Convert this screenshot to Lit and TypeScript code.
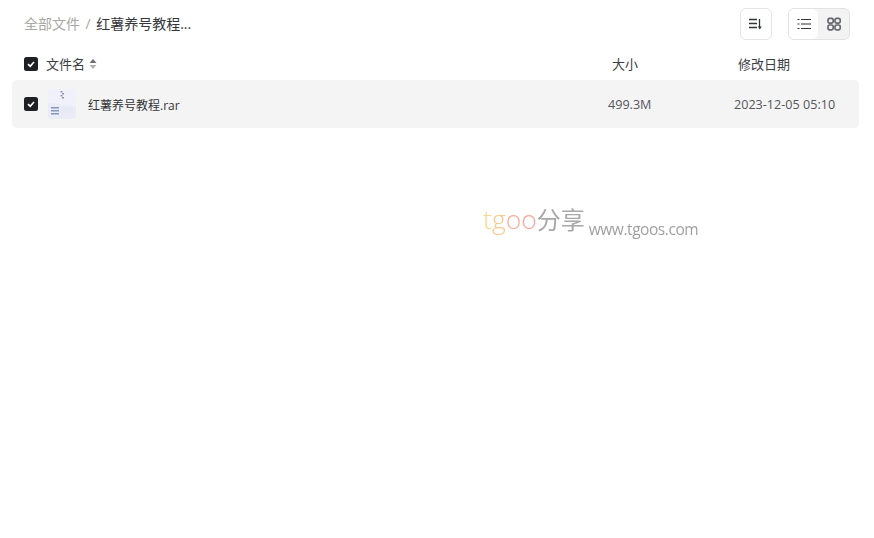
import { LitElement, html, css } from "lit";
import { customElement } from "lit/decorators.js";

@customElement("app-root")
export class AppRoot extends LitElement {
  static styles = css`
    :host { display: block; position: relative; width: 874px; height: 538px; background: #fff; overflow: hidden;
      font-family: "Open Sans", "Noto Sans CJK SC", sans-serif; color: #25262b; }
    .top { display: flex; align-items: center; height: 32px; padding: 8px 24px 0 24px; }
    .crumb { display: flex; align-items: center; font-size: 14px; flex: 1; line-height: 20px; padding-bottom: 1px; }
    .all { color: #a9a7a4; }
    .sep { color: #a9a7a4; margin: 0 5.5px; }
    .cur { color: #33343a; }
    .btn { width: 30px; height: 30px; border: 1px solid #e6e6e8; border-radius: 6px; display: flex; align-items: center; justify-content: center; background: #fff; }
    .toggle { display: flex; margin-left: 16px; width: 60px; height: 30px; border: 1px solid #e2e2e4; border-radius: 6px; background: #f3f3f4; overflow: hidden; }
    .toggle > div { display: flex; align-items: center; justify-content: center; }
    .toggle .on { width: 29px; background: #fff; border-radius: 0 6px 6px 0; }
    .toggle .off { width: 31px; }
    .head { display: grid; grid-template-columns: 14px 1fr 126px 136px; align-items: center; height: 32px; margin-top: 8px; padding: 0 0 0 24px; font-size: 13px; color: #3c3d44; }
    .head > div:not(.cb) { line-height: 18px; padding-bottom: 1px; }
    .nm { display: flex; align-items: center; margin-left: 8px; }
    .nm svg { margin-left: 4px; }
    .cb { width: 14px; height: 14px; border-radius: 2.5px; background: #1f2026; display: flex; align-items: center; justify-content: center; }
    .row { display: grid; grid-template-columns: 14px 38px 1fr 126px 125px; align-items: center; height: 48px; margin: 0 15px 0 12px; padding-left: 12px; background: #f4f4f4; border-radius: 5px; font-size: 13px; }
    .ic { margin-left: 9px; display: flex; }
    .ic svg { flex: none; }
    .fn { margin-left: 12px; padding-top: 1px; font-size: 12px; color: #33343a; }
    .sz, .dt { font-size: 12.6px; color: #55565c; }
    .wm { position: absolute; left: 483px; top: 201px; display: flex; align-items: baseline; filter: blur(0.5px); white-space: nowrap; color: #a3a3a3; }
    .t { font-family: "Open Sans", sans-serif; font-size: 26.5px; font-weight: 300; }
    .t1 { color: #fbd68e; } .t2 { color: #fcc88e; } .t3 { color: #fab09a; } .t4 { color: #f9a89e; }
    .fx { font-size: 24px; margin-left: 0; font-family: "Noto Sans CJK SC", sans-serif; font-weight: 400; color: #a8a8a8; }
    .url { font-family: "Open Sans", sans-serif; font-size: 15.5px; letter-spacing: -0.45px; margin-left: 4px; position: relative; top: 6px; color: #a0a0a0; }
  `;

  check() {
    return html`<div class="cb"><svg width="10" height="10" viewBox="0 0 10 10"><path d="M2 5.2 4.2 7.2 8 3" fill="none" stroke="#fff" stroke-width="1.7"/></svg></div>`;
  }

  render() {
    return html`
      <div class="top">
        <div class="crumb"><span class="all">全部文件</span><span class="sep">/</span><span class="cur">红薯养号教程...</span></div>
        <div class="btn"><svg width="16" height="16" viewBox="0 0 16 16"><path d="M1 3.5h8M1 7.5h8M1 11.5h8" stroke="#33343a" stroke-width="1.3" fill="none"/><path d="M11.5 3v8" stroke="#33343a" stroke-width="1.3"/><path d="M9.8 10.5h4l-2 3z" fill="#33343a"/></svg></div>
        <div class="toggle">
          <div class="on"><svg width="16" height="16" viewBox="0 0 16 16"><path d="M1.5 3.5h2M1.5 8h2M1.5 12.5h2M5 3.5h10M5 8h10M5 12.5h10" stroke="#33343a" stroke-width="1.2" fill="none"/></svg></div>
          <div class="off"><svg width="16" height="16" viewBox="0 0 16 16"><rect x="2" y="2.4" width="5.2" height="4.8" rx="1.6" fill="none" stroke="#66676c" stroke-width="1.7"/><rect x="9" y="2.4" width="5.2" height="4.8" rx="1.6" fill="none" stroke="#66676c" stroke-width="1.7"/><rect x="2" y="9" width="5.2" height="4.8" rx="1.6" fill="none" stroke="#66676c" stroke-width="1.7"/><rect x="9" y="9" width="5.2" height="4.8" rx="1.6" fill="none" stroke="#66676c" stroke-width="1.7"/></svg></div>
        </div>
      </div>
      <div class="head">
        ${this.check()}
        <div class="nm">文件名<svg width="8" height="12" viewBox="0 0 8 12"><path d="M4 1 7.5 5H.5z" fill="#6f7074"/><path d="M4 11 7.5 7H.5z" fill="#b0b0b2"/></svg></div>
        <div>大小</div>
        <div>修改日期</div>
      </div>
      <div class="row">
        ${this.check()}
        <div class="ic"><svg width="30" height="30" viewBox="0 0 30 30">
          <path d="M4 0h22a3 3 0 0 1 3 3v24a3 3 0 0 1-3 3H4a3 3 0 0 1-3-3V3a3 3 0 0 1 3-3z" fill="#f0f1fa"/>
          <path d="M1 14 29 17v10a3 3 0 0 1-3 3H4a3 3 0 0 1-3-3z" fill="#eaecf8"/>
          <path d="M13.5 2h2v1.5h-2zM15 4h2v1.5h-2zM13.5 6h2v1.5h-2zM15 8h2v1.5h-2z" fill="#8a93b8"/>
          <path d="M4 18h8v1.6H4zM4 21h8v1.6H4zM4 24h8v1.6H4z" fill="#8a95bb"/>
          <rect x="14" y="18" width="12" height="6" fill="#e6e8f4"/>
        </svg></div>
        <div class="fn">红薯养号教程.rar</div>
        <div class="sz">499.3M</div>
        <div class="dt">2023-12-05 05:10</div>
      </div>
      <div class="wm"><span class="t"><span class="t1">t</span><span class="t2">g</span><span class="t3">o</span><span class="t4">o</span></span><span class="fx">分享</span><span class="url">www.tgoos.com</span></div>
    `;
  }
}
